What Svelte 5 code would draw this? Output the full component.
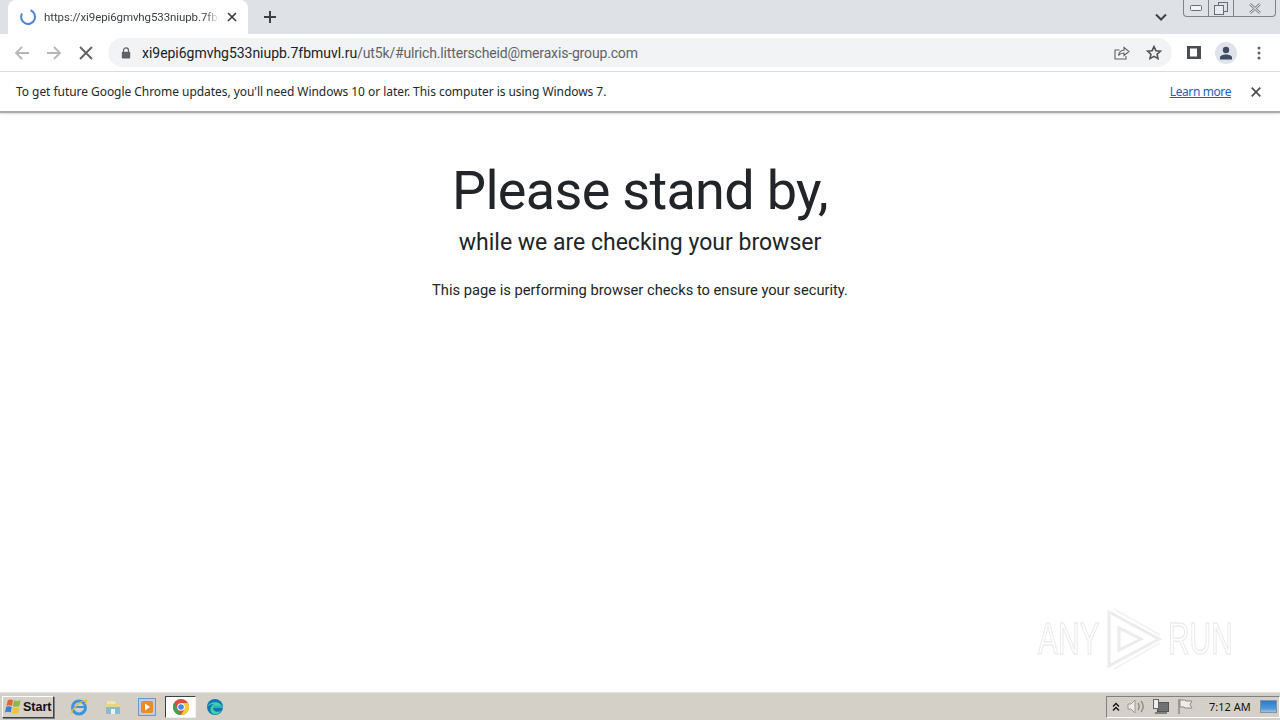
<script>
  const hostPart = "xi9epi6gmvhg533niupb.7fbmuvl.ru";
  const pathPart = "/ut5k/#ulrich.litterscheid@meraxis-group.com";
</script>

<div class="screen">
  <header class="tabstrip">
    <div class="tab">
      <svg class="spinner" width="18" height="18" viewBox="0 0 18 18"><path d="M11.5 2.3A7 7 0 1 1 3 5.4" fill="none" stroke="#4a86d8" stroke-width="2"/></svg>
      <span class="tab-title">https://xi9epi6gmvhg533niupb.7fbmuvl.ru/ut5k/</span>
      <svg class="tab-close" width="10" height="10" viewBox="0 0 10 10"><path d="M1 1l8 8M9 1l-8 8" stroke="#3c4043" stroke-width="1.7"/></svg>
    </div>
    <svg class="newtab" width="14" height="14" viewBox="0 0 14 14"><path d="M7 1v12M1 7h12" stroke="#3c4043" stroke-width="2"/></svg>
    <svg class="tabsearch" width="12" height="8" viewBox="0 0 12 8"><path d="M1 1.5l5 5 5-5" fill="none" stroke="#3c4043" stroke-width="2"/></svg>
    <div class="winbtns">
      <div class="wb min"><svg width="12" height="6" viewBox="0 0 12 6"><rect x=".5" y=".5" width="11" height="5" rx="1" fill="#f3f4f6" stroke="#666d75"/></svg></div>
      <div class="wb max"><svg width="14" height="13" viewBox="0 0 14 13"><rect x="4.5" y=".5" width="9" height="9" fill="none" stroke="#666d75"/><rect x=".5" y="3.5" width="9" height="9" fill="#e9ebee" stroke="#666d75"/></svg></div>
      <div class="wb cls"><svg width="14" height="11" viewBox="0 0 14 11"><path d="M2 1l10 9M12 1L2 10" stroke="#7b8087" stroke-width="2.4"/><path d="M2 1l10 9M12 1L2 10" stroke="#f4f5f6" stroke-width="1"/></svg></div>
    </div>
  </header>

  <div class="toolbar">
    <svg class="nav" width="16" height="16" viewBox="0 0 16 16"><path d="M15 8H2M8 2L2 8l6 6" fill="none" stroke="#b4b6b9" stroke-width="1.8"/></svg>
    <svg class="nav" width="16" height="16" viewBox="0 0 16 16"><path d="M1 8h13M8 2l6 6-6 6" fill="none" stroke="#b4b6b9" stroke-width="1.8"/></svg>
    <svg class="nav stop" width="16" height="16" viewBox="0 0 16 16"><path d="M2 2l12 12M14 2L2 14" stroke="#5f6368" stroke-width="1.9"/></svg>
    <div class="omnibox">
      <svg class="lock" width="10" height="12" viewBox="0 0 10 12"><path d="M2.5 5V3.4a2.5 2.5 0 0 1 5 0V5" fill="none" stroke="#5f6368" stroke-width="1.2"/><rect x=".8" y="4.8" width="8.4" height="6.6" rx="1" fill="#5f6368"/></svg>
      <span class="url"><span class="host">{hostPart}</span><span class="path">{pathPart}</span></span>
      <svg class="share" width="16" height="15" viewBox="0 0 16 15"><path d="M5.5 5H1v9h11v-3" fill="none" stroke="#5f6368" stroke-width="1.1"/><path d="M4.5 10.5C5 7 7.5 5.3 10 5.3V2.5L15 6.5l-5 4V8C8 8 6 8.5 4.5 10.5z" fill="none" stroke="#5f6368" stroke-width="1.1"/></svg>
      <svg class="star" width="16" height="15" viewBox="0 0 16 15"><path d="M8 1.6l1.9 4.1 4.500.5-3.300 3 .9 4.400L8 11.400l-4 2.200.9-4.400-3.300-3 4.500-.5z" fill="none" stroke="#4f5357" stroke-width="1.600"/></svg>
    </div>
    <svg class="panel" width="14" height="13" viewBox="0 0 14 13"><path d="M0 0h14v13H0z M3 2.500v8h7v-8z" fill="#4a4d51" fill-rule="evenodd"/></svg>
    <div class="avatar">
      <svg width="14" height="14" viewBox="0 0 14 14"><circle cx="7" cy="4" r="3.200" fill="#414c63"/><path d="M1 13.500V11.500C1 9.500 4 8.500 7 8.500s6 1 6 3v2z" fill="#414c63"/></svg>
    </div>
    <svg class="kebab" width="4" height="14" viewBox="0 0 4 14"><circle cx="2" cy="2" r="1.500" fill="#5f6368"/><circle cx="2" cy="7" r="1.500" fill="#5f6368"/><circle cx="2" cy="12" r="1.500" fill="#5f6368"/></svg>
  </div>

  <div class="infobar">
    <span class="info-text">To get future Google Chrome updates, you'll need Windows 10 or later. This computer is using Windows 7.</span>
    <span class="learn">Learn more</span>
    <svg width="10" height="10" viewBox="0 0 10 10"><path d="M.7.7l8.600 8.600M9.300.7L.7 9.300" stroke="#484b4f" stroke-width="1.700"/></svg>
  </div>

  <main class="page">
    <h1>Please stand by,</h1>
    <h2>while we are checking your browser</h2>
    <p>This page is performing browser checks to ensure your security.</p>

    <div class="watermark">
      <span>ANY</span>
      <svg width="58" height="62" viewBox="0 0 58 62"><path d="M4 4v54l50-27z M14 20v22l22-11z" fill="none" stroke="#ececec" stroke-width="3"/><path d="M9 1l46 26M9 61l46-26" fill="none" stroke="#f2f2f2" stroke-width="2"/></svg>
      <span>RUN</span>
    </div>
  </main>

  <footer class="taskbar">
    <div class="start">
      <svg width="18" height="17" viewBox="0 0 18 17"><path d="M4 2c2-1 4-.5 5 .2L8 8C6.500 7 4 7 2.500 7.800z" fill="#e0653a"/><path d="M10 2.300c2 1 4 1 6.500 0L15.500 8c-2 1-4.500 1-6.500.2z" fill="#8bbb3c"/><path d="M2.200 8.800C4 8 6 8 7.800 9l-1 5.500C5 13.500 3 13.500 1 14.500z" fill="#3b7fd1"/><path d="M9 9.300c2 .9 4.500.9 6.300 0L14.300 15c-2 1-4.500 1-6.300 0z" fill="#f0c32f"/></svg>
      <span>Start</span>
    </div>
    <div class="quick">
      <div class="qi">
        <svg width="18" height="18" viewBox="0 0 18 18"><circle cx="9" cy="9.500" r="6.500" fill="none" stroke="#3d95da" stroke-width="3"/><path d="M4 9h10" stroke="#3d95da" stroke-width="2"/><path d="M2 15C1 12 10 3 16 2c1 1 0 3-1 4" fill="none" stroke="#e8b93c" stroke-width="1.200"/></svg>
      </div>
      <div class="qi">
        <svg width="18" height="18" viewBox="0 0 18 18"><path d="M2 6h14v10H2z" fill="#e8d48c"/><path d="M3 3h8l1 3H3z" fill="#f2e4ae"/><path d="M2 9h14v7H2z" fill="#8bb9cf"/><path d="M7 11h4v5H7z" fill="#eef3f5"/></svg>
      </div>
      <div class="qi">
        <svg width="18" height="18" viewBox="0 0 18 18"><rect x=".5" y=".5" width="17" height="17" fill="#b8cfe6" stroke="#6f97c2"/><rect x="3" y="3" width="12" height="12" rx="2" fill="#ee8a22"/><path d="M7 5.500l5 3.500-5 3.500z" fill="#fff"/></svg>
      </div>
      <div class="qi chrome">
        <svg width="16" height="16" viewBox="0 0 16 16"><circle cx="8" cy="8" r="8" fill="#dd4b3e"/><path d="M8 16A8 8 0 0 1 1 4l4 7z" fill="#3aa757"/><path d="M8 16a8 8 0 0 0 7-12H8l3 7z" fill="#fcc934"/><circle cx="8" cy="8" r="3.800" fill="#fff"/><circle cx="8" cy="8" r="2.800" fill="#4285f4"/></svg>
      </div>
      <div class="qi">
        <svg width="18" height="18" viewBox="0 0 18 18"><circle cx="9" cy="9" r="8" fill="#1173b8"/><path d="M1.500 9C3 3 15 2 16.800 10H7c0 3 4 5 8 3-2 4-7 4-9 2C3.500 13 4 8 8 6 5 6 3 7 1.500 9z" fill="#45d0a0"/><path d="M7 10h9.800c0-1-.1-1.500-.3-2.500H7.300z" fill="#2bb0c9"/></svg>
      </div>
    </div>
    <div class="tray">
      <svg width="8" height="10" viewBox="0 0 8 10"><path d="M1 4.500l3-3 3 3M1 8.500l3-3 3 3" fill="none" stroke="#111" stroke-width="1.300"/></svg>
      <svg class="t-sound" width="18" height="17" viewBox="0 0 18 17"><path d="M1 6h3l4-4v13l-4-4H1z" fill="#efede8" stroke="#9a9a98"/><path d="M11 5c1.500 2.300 1.500 4.700 0 7M14 3c2.700 3.300 2.700 7.700 0 11" fill="none" stroke="#8c8c8a" stroke-width="1.400"/></svg>
      <svg width="18" height="17" viewBox="0 0 18 17"><rect x="5.500" y="4.500" width="11" height="9" fill="#6f7172" stroke="#555"/><rect x="1.500" y="1.500" width="5" height="9" fill="#eee" stroke="#666"/><path d="M3 15h12" stroke="#666" stroke-width="1.500"/></svg>
      <svg width="17" height="17" viewBox="0 0 17 17"><path d="M2 1v15" stroke="#8a8a88" stroke-width="1.500"/><path d="M3 2h5l1 1h6l-2 3.500 2 3.500H8L7 9H3z" fill="#efede8" stroke="#8a8a88"/></svg>
      <span class="clock">7:12 AM</span>
      <div class="showdesk"></div>
    </div>
  </footer>
</div>

<style>
  :global(body) {
    margin: 0;
    overflow: hidden;
  }

  .screen {
    width: 1280px;
    height: 720px;
    display: flex;
    flex-direction: column;
    font-family: "Noto Sans", "Open Sans", sans-serif;
    background: #fff;
  }

  .tabstrip {
    height: 34px;
    flex: none;
    background: #dee1e6;
    display: flex;
    align-items: flex-end;
    padding-left: 8px;
  }

  .tab {
    width: 240px;
    height: 34px;
    box-sizing: border-box;
    background: #fff;
    border-radius: 8px 8px 0 0;
    display: flex;
    align-items: center;
    padding: 0 11px;
    gap: 7px;
  }

  .tab-title {
    flex: 1;
    overflow: hidden;
    white-space: nowrap;
    font-family: Roboto, sans-serif;
    font-size: 11.5px;
    letter-spacing: -0.1px;
    color: #3c4043;
    -webkit-mask-image: linear-gradient(to right, #000 92%, transparent);
    mask-image: linear-gradient(to right, #000 92%, transparent);
  }

  .tab-close {
    margin-left: 1px;
  }

  .newtab {
    margin: 0 0 10px 15px;
  }

  .tabsearch {
    margin: 0 0 13px auto;
  }

  .winbtns {
    align-self: flex-start;
    display: flex;
    margin: 0 4px 0 16px;
    height: 16px;
    border: 1px solid #7f848b;
    border-top: none;
    border-radius: 0 0 4px 4px;
  }

  .wb {
    display: flex;
    align-items: center;
    justify-content: center;
    border-right: 1px solid #7f848b;
  }

  .min { width: 24px; }
  .max { width: 24px; }
  .cls { width: 41px; border-right: none; }

  .toolbar {
    height: 38px;
    flex: none;
    box-sizing: border-box;
    border-bottom: 1px solid #dadce0;
    display: flex;
    align-items: center;
    padding-left: 14px;
  }

  .nav {
    margin-right: 16px;
  }

  .nav.stop {
    margin-right: 14px;
  }

  .omnibox {
    width: 1064px;
    height: 29px;
    background: #f1f3f4;
    border-radius: 15px;
    display: flex;
    align-items: center;
    padding: 0 10px 0 13px;
    box-sizing: border-box;
  }

  .url {
    flex: 1;
    margin-left: 11px;
    font-family: Roboto, sans-serif;
    font-size: 14px;
    color: #5f6368;
    white-space: nowrap;
  }

  .host {
    color: #202124;
    letter-spacing: -0.03px;
  }

  .path {
    letter-spacing: -0.16px;
  }

  .star {
    margin-left: 16px;
  }

  .panel {
    margin-left: 15px;
  }

  .avatar {
    width: 22px;
    height: 22px;
    margin-left: 14px;
    border-radius: 50%;
    background: #dfe3ea;
    display: flex;
    align-items: center;
    justify-content: center;
  }

  .kebab {
    margin-left: 20px;
  }

  .infobar {
    height: 41px;
    flex: none;
    box-sizing: border-box;
    display: flex;
    align-items: center;
    padding: 0 19px 0 16px;
    border-bottom: 2px solid #a9abad;
    box-shadow: 0 1px 2px #d8d8d8;
    position: relative;
  }

  .info-text {
    flex: 1;
    font-size: 12px;
    color: #26282b;
    letter-spacing: -0.05px;
  }

  .learn {
    font-size: 12px;
    color: #1a62b8;
    text-decoration: underline;
    letter-spacing: -0.4px;
    margin-right: 20px;
  }

  .page {
    flex: 1;
    display: flex;
    flex-direction: column;
    align-items: center;
    position: relative;
    font-family: Roboto, sans-serif;
    color: #212529;
  }

  h1 {
    margin: 44px 0 0;
    font-size: 54px;
    font-weight: 400;
    line-height: 67px;
    letter-spacing: -0.7px;
  }

  h2 {
    margin: 5px 0 0;
    font-size: 23px;
    font-weight: 400;
    line-height: 28px;
  }

  p {
    margin: 22px 0 0;
    font-size: 14.700px;
    line-height: 22px;
  }

  .watermark {
    position: absolute;
    left: 1038px;
    top: 495px;
    display: flex;
    align-items: center;
    gap: 5px;
    color: #fff;
    font-size: 44px;
    font-family: "Liberation Sans", sans-serif;
    -webkit-text-stroke: 1.500px #ececec;
  }

  .watermark span {
    width: 62px;
    white-space: nowrap;
    transform: scaleX(0.68);
    transform-origin: left center;
  }

  .taskbar {
    height: 28px;
    flex: none;
    box-sizing: border-box;
    background: #d4d0c8;
    border-top: 1px solid #e6e3dc;
    display: flex;
    align-items: center;
    padding-left: 2px;
  }

  .start {
    width: 52px;
    height: 22px;
    box-sizing: border-box;
    background: #d4d0c8;
    border: 1px solid;
    border-color: #fff #404040 #404040 #fff;
    box-shadow: 1px 1px 0 #808080;
    display: flex;
    align-items: center;
    gap: 1px;
    padding-left: 1px;
    font-family: "Liberation Sans", sans-serif;
    font-size: 12.500px;
    font-weight: 700;
    color: #111;
  }

  .quick {
    display: flex;
    align-items: center;
    margin-left: 9px;
    gap: 3px;
  }

  .qi {
    width: 31px;
    height: 22px;
    display: flex;
    align-items: center;
    justify-content: center;
    box-sizing: border-box;
  }

  .chrome {
    background: #fff;
    border: 1px solid;
    border-color: #404040 #f4f2ee #f4f2ee #404040;
  }

  .tray {
    margin-left: auto;
    height: 22px;
    width: 174px;
    box-sizing: border-box;
    display: flex;
    align-items: center;
    gap: 7px;
    padding-left: 5px;
    border: 1px solid;
    border-color: #808080 #fff #fff #808080;
  }

  .clock {
    font-size: 11px;
    color: #111;
    margin-left: 8px;
    white-space: nowrap;
  }

  .showdesk {
    width: 15px;
    height: 11px;
    margin-left: 2px;
    background: linear-gradient(#2f79c9, #4e9ad9 70%, #a9c4d8);
    border: 1px solid #7d95ac;
  }
</style>
